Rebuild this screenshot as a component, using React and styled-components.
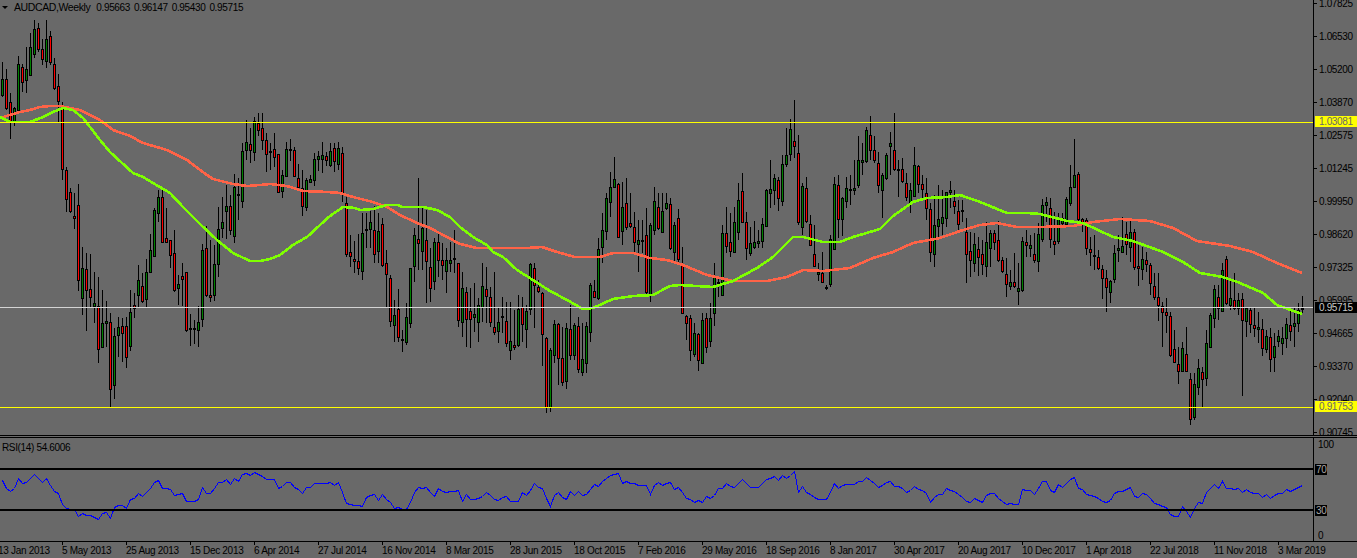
import React from "react";
import styled, { createGlobalStyle } from "styled-components";

const GlobalStyle = createGlobalStyle`
  html, body {
    margin: 0;
    padding: 0;
    overflow: hidden;
    background: #696969;
  }
`;

const Chart = styled.div`
  width: 1357px;
  height: 558px;
  background: #696969;
  color: #000;
  font-family: "Liberation Sans", Arial, sans-serif;
  font-size: 10px;
  letter-spacing: -0.35px;
  line-height: 11px;
  display: flex;
  flex-direction: column;
  overflow: hidden;
`;

const Row = styled.div`
  display: flex;
  height: ${(p) => p.$height}px;
  border-top: ${(p) => (p.$top ? "1px solid #000" : "0")};
  border-bottom: 1px solid #000;
  margin-bottom: ${(p) => p.$gap || 0}px;
  flex: none;
`;

const Plot = styled.div`
  position: relative;
  width: 1313px;
  flex: none;
  overflow: hidden;

  svg {
    display: block;
  }
`;

const Legend = styled.div`
  position: absolute;
  left: ${(p) => p.$left}px;
  top: ${(p) => p.$top}px;
  display: flex;
  align-items: center;
  gap: 6px;
  white-space: nowrap;
`;

const Caret = styled.span`
  width: 0;
  height: 0;
  border-left: 3px solid transparent;
  border-right: 3px solid transparent;
  border-top: 3px solid #000;
`;

const Symbol = styled.span`
  font-size: 10.5px;
  letter-spacing: -0.4px;
`;

const Quotes = styled.span`
  display: flex;
  gap: 4px;
`;

const Axis = styled.div`
  position: relative;
  flex: 1;
  border-left: 1px solid #000;
  display: flex;
  flex-direction: column;
  justify-content: ${(p) => (p.$spread ? "space-between" : "flex-start")};
  padding-top: ${(p) => (p.$spread ? 1 : 0)}px;
`;

const PriceTick = styled.div`
  position: relative;
  flex: none;
  height: 33px;
  line-height: 33px;
  padding-left: 5px;
  top: -13px;

  &::before {
    content: "";
    position: absolute;
    left: 0;
    top: 16px;
    width: 3px;
    height: 1px;
    background: #000;
  }
`;

const LevelLabel = styled.div`
  height: 11px;
  padding-left: 4px;
`;

const Badge = styled.div`
  position: absolute;
  left: 1px;
  right: ${(p) => p.$right || 0}px;
  top: ${(p) => p.$top}px;
  height: 11px;
  line-height: 11px;
  padding-left: ${(p) => p.$pad || 4}px;
  background: ${(p) => p.$bg};
  color: ${(p) => p.$color};
`;

const Dates = styled.div`
  display: flex;
  margin-left: -2px;
  height: 16px;
`;

const DateCell = styled.div`
  position: relative;
  flex: none;
  width: 64px;
  line-height: 17px;
  white-space: nowrap;
  letter-spacing: -0.3px;

  &::before {
    content: "";
    display: ${(p) => (p.$first ? "none" : "block")};
    position: absolute;
    left: 0;
    top: 0;
    width: 1px;
    height: 3px;
    background: #000;
  }
`;

const prices = [
  "1.07825", "1.06530", "1.05200", "1.03870", "1.02575", "1.01245", "0.99950",
  "0.98620", "0.97325", "0.95995", "0.94665", "0.93370", "0.92040", "0.90745",
];

const dates = [
  "13 Jan 2013", "5 May 2013", "25 Aug 2013", "15 Dec 2013", "6 Apr 2014", "27 Jul 2014",
  "16 Nov 2014", "8 Mar 2015", "28 Jun 2015", "18 Oct 2015", "7 Feb 2016", "29 May 2016",
  "18 Sep 2016", "8 Jan 2017", "30 Apr 2017", "20 Aug 2017", "10 Dec 2017", "1 Apr 2018",
  "22 Jul 2018", "11 Nov 2018", "3 Mar 2019",
];

// [up, bodyTop, bodyBottom, wickTop, wickBottom], in pixels of the plot
const candles = [
  [1,79,95,62,97],[0,79,108,69,110],[0,102,122,93,139],[1,108,122,107,126],[1,64,110,56,112],
  [0,67,82,64,92],[1,69,80,47,93],[1,47,75,33,76],[1,29,54,20,58],[0,28,49,23,52],
  [0,49,59,39,65],[1,39,61,20,68],[0,36,62,31,65],[0,64,88,58,90],[0,86,101,74,123],
  [0,107,169,102,180],[0,170,199,167,212],[0,192,211,188,213],[0,216,218,193,229],[0,205,280,184,291],
  [1,268,298,247,315],[0,269,290,253,331],[0,289,297,254,307],[1,303,306,272,323],[0,306,349,277,363],
  [1,323,347,290,347],[1,321,323,301,347],[0,322,389,313,408],[1,336,385,328,399],[1,327,335,317,357],
  [0,326,333,318,362],[0,326,357,317,368],[1,312,346,290,351],[0,305,308,293,318],[1,280,295,265,307],
  [0,286,301,273,303],[1,272,299,259,308],[1,250,272,234,273],[1,210,256,208,257],[1,197,213,190,222],
  [0,197,242,188,243],[0,238,242,208,243],[0,240,255,240,268],[0,253,290,230,292],[1,284,288,275,305],
  [0,276,279,263,306],[0,272,330,272,332],[0,328,329,314,346],[0,328,329,320,344],[1,322,330,306,347],
  [1,250,319,244,327],[0,248,295,226,297],[0,295,297,240,302],[1,264,295,245,301],[1,229,264,207,277],
  [1,222,228,197,238],[1,206,211,185,239],[0,206,230,195,235],[1,187,236,174,243],[0,194,195,178,220],
  [1,151,201,143,208],[1,142,150,120,160],[0,144,150,128,163],[1,121,152,117,161],[0,123,130,113,136],
  [0,128,140,113,150],[0,140,154,133,172],[0,151,152,143,170],[0,149,157,133,167],[0,154,192,154,193],
  [1,175,191,170,198],[1,149,176,142,177],[0,149,150,139,161],[0,150,176,147,177],[0,178,187,164,188],
  [0,188,206,170,216],[1,180,207,178,211],[1,179,182,175,183],[1,159,180,153,186],[1,156,159,151,171],
  [1,155,159,142,173],[0,156,160,152,166],[1,151,165,143,167],[0,148,161,143,172],[1,148,164,142,170],
  [0,153,194,147,202],[0,203,254,197,257],[0,252,256,235,267],[0,259,261,241,273],[0,261,268,234,275],
  [1,233,271,213,280],[0,229,230,213,248],[1,222,229,211,248],[0,230,254,206,263],[1,231,251,213,263],
  [0,224,265,218,267],[0,263,274,250,308],[0,278,321,275,327],[1,315,325,300,342],[0,309,337,289,342],
  [0,339,340,330,352],[1,317,342,303,345],[1,268,323,268,328],[1,235,266,228,282],[0,239,243,178,270],
  [1,228,251,207,270],[0,240,261,210,303],[0,267,288,248,302],[1,242,281,238,290],[0,242,260,232,277],
  [0,260,265,243,280],[1,260,271,248,293],[1,260,263,242,272],[0,258,259,230,273],[0,263,320,263,327],
  [1,288,322,272,337],[0,292,319,287,347],[0,311,319,288,348],[1,314,317,283,332],[1,305,322,298,342],
  [1,286,307,263,322],[0,289,296,267,323],[0,297,322,287,327],[0,327,332,272,335],[1,322,331,307,343],
  [0,316,317,297,333],[0,321,343,302,347],[1,341,350,302,360],[0,345,347,310,350],[1,309,345,295,347],
  [0,307,324,297,342],[1,311,329,305,348],[1,264,309,263,315],[0,268,285,263,328],[0,287,291,280,293],
  [0,293,334,292,366],[0,338,407,337,413],[1,350,407,348,412],[1,324,355,320,363],[0,324,358,323,385],
  [0,358,382,327,386],[1,328,381,323,389],[0,329,355,305,360],[1,325,355,323,360],[0,326,369,317,373],
  [1,359,372,323,376],[1,326,363,322,373],[1,285,332,283,342],[0,291,297,280,298],[1,249,298,238,300],
  [1,230,247,213,263],[1,198,231,193,240],[1,187,202,172,217],[1,179,187,157,188],[0,184,237,183,238],
  [1,207,231,182,245],[0,203,227,178,230],[0,223,226,193,228],[0,227,242,212,252],[1,240,244,220,272],
  [0,240,241,220,253],[0,235,292,208,295],[1,225,294,223,302],[1,201,230,187,235],[0,207,228,193,230],
  [1,211,232,193,233],[1,203,208,193,210],[0,204,248,198,250],[1,225,252,222,262],[0,218,259,209,262],
  [0,265,313,247,313],[0,316,323,315,340],[0,318,350,315,361],[1,333,354,323,357],[0,334,360,333,371],
  [1,320,363,313,364],[0,318,347,313,353],[1,318,341,303,347],[1,277,313,263,326],[0,282,283,277,297],
  [1,233,295,225,296],[0,233,246,207,253],[0,242,251,213,257],[1,222,252,207,253],[1,200,232,183,240],
  [0,191,222,173,223],[0,222,248,212,260],[1,243,253,227,256],[1,242,247,221,249],[1,241,243,230,248],
  [1,224,241,218,248],[1,190,226,189,227],[1,189,193,160,208],[1,178,190,174,205],[0,180,198,177,211],
  [1,164,201,155,206],[1,155,164,128,167],[1,129,154,119,161],[0,141,146,100,158],[0,153,222,135,225],
  [1,186,227,183,235],[0,188,221,177,223],[0,224,245,215,246],[0,254,266,225,267],[1,272,274,263,281],
  [0,273,282,252,283],[0,287,288,285,290],[1,239,284,235,287],[1,184,249,177,250],[0,185,219,175,238],
  [1,198,219,197,236],[1,188,201,177,208],[0,189,190,175,205],[1,188,190,160,195],[1,160,185,136,188],
  [1,160,162,143,175],[1,130,161,127,163],[0,135,150,116,160],[0,150,160,136,163],[0,163,185,152,193],
  [1,175,190,173,218],[1,155,178,153,180],[1,143,146,132,175],[0,150,169,113,171],[0,169,170,160,197],
  [0,169,181,158,183],[0,183,197,173,201],[1,190,202,183,213],[1,165,196,147,197],[0,166,184,165,193],
  [0,184,189,175,200],[0,193,208,178,220],[0,209,252,203,262],[1,225,254,195,267],[1,219,226,185,238],
  [1,217,223,190,235],[1,192,218,192,227],[1,190,192,181,208],[0,201,206,190,214],[0,211,224,200,230],
  [0,210,211,200,222],[0,232,254,218,283],[0,251,260,232,277],[1,244,263,233,272],[0,249,257,237,276],
  [0,254,264,240,275],[1,242,266,222,277],[1,233,248,230,267],[0,233,242,230,250],[0,240,260,221,262],
  [0,260,271,257,273],[0,274,284,258,297],[1,282,286,270,290],[0,282,286,253,288],[1,288,291,263,305],
  [1,241,290,237,292],[0,242,245,230,257],[1,245,248,235,257],[0,254,260,233,263],[1,234,261,223,272],
  [1,205,239,199,242],[1,202,205,197,222],[0,208,239,198,248],[0,241,244,212,255],[1,219,241,213,244],
  [1,218,223,213,228],[1,199,224,197,225],[1,187,203,165,206],[1,175,187,139,188],[0,174,219,172,221],
  [0,219,223,218,232],[0,220,248,218,255],[0,249,252,237,266],[0,255,256,235,270],[0,257,268,250,270],
  [0,269,278,265,299],[0,278,287,270,312],[1,281,292,280,303],[1,253,279,245,283],[1,248,250,235,262],
  [1,246,252,217,253],[0,234,244,222,255],[1,232,247,220,262],[0,232,267,229,270],[0,266,268,245,286],
  [1,259,269,247,280],[0,260,264,252,272],[0,265,283,263,295],[0,286,297,273,300],[0,297,305,273,321],
  [0,306,312,302,347],[0,312,315,298,333],[0,316,355,312,357],[0,349,362,330,363],[0,364,371,347,384],
  [1,348,371,342,372],[0,354,371,327,372],[0,379,419,373,425],[1,384,417,373,420],[1,368,387,359,395],
  [0,372,379,367,407],[1,343,378,330,386],[1,315,347,313,348],[1,289,318,285,328],[0,297,308,285,320],
  [1,270,311,263,312],[0,259,303,256,305],[1,298,305,280,310],[0,300,308,273,310],[1,300,308,293,315],
  [0,299,320,293,396],[1,308,321,307,337],[0,310,324,307,333],[0,325,328,307,337],[1,327,329,312,343],
  [0,329,348,319,356],[1,336,349,330,353],[0,337,359,328,372],[1,346,357,333,372],[1,336,341,330,347],
  [1,338,343,327,355],[1,324,338,318,348],[0,325,331,310,341],[1,323,326,308,347],[1,310,323,303,332],
  [0,308,309,296,313],
];

const slowAverage = [
  [0,118],[10,115],[20,112],[30,110],[40,107],[50,106],[60,106],[70,108],[80,110],[90,115],[100,120],
  [113,130],[130,136],[143,143],[167,150],[187,160],[207,175],[213,179],[233,184],[247,186],[260,185],
  [270,184],[287,186],[303,191],[327,192],[340,193],[353,197],[373,202],[387,207],[400,215],[417,223],
  [430,228],[447,237],[460,244],[477,248],[527,248],[542,247],[557,252],[575,257],[600,257],[613,253],
  [633,253],[650,258],[667,260],[683,265],[707,275],[733,281],[767,281],[787,277],[803,270],[823,271],
  [850,268],[873,258],[893,252],[913,243],[940,238],[960,231],[980,225],[997,223],[1017,227],[1040,227],
  [1073,226],[1093,222],[1120,219],[1150,221],[1173,228],[1197,241],[1230,246],[1253,252],[1277,263],[1302,273],
];

const fastAverage = [
  [0,117],[10,122],[30,122],[43,117],[53,112],[63,108],[73,110],[83,118],[90,127],[100,140],[110,152],
  [133,173],[143,177],[153,183],[170,193],[183,207],[200,224],[217,240],[233,253],[250,261],[260,261],
  [270,259],[280,255],[293,245],[307,237],[320,225],[330,216],[343,207],[355,208],[360,210],[373,209],
  [387,205],[398,205],[402,207],[423,207],[437,210],[450,217],[460,227],[473,237],[487,245],[493,252],
  [503,257],[517,270],[533,280],[550,291],[567,300],[583,309],[593,308],[613,299],[633,296],[653,295],
  [670,286],[680,285],[713,287],[733,281],[757,268],[773,257],[787,243],[793,237],[803,237],[823,242],
  [840,242],[853,237],[880,229],[893,216],[913,202],[927,198],[947,197],[960,195],[980,202],[1007,213],
  [1027,213],[1040,214],[1067,221],[1083,223],[1113,237],[1133,241],[1163,252],[1183,262],[1200,273],
  [1223,277],[1240,283],[1263,293],[1277,305],[1302,314],
];

// one value per candle, page pixels
const rsi = [
  480,488,491,488,478,483,482,478,474,478,
  482,478,485,491,493,504,508,509,509,516,
  513,515,515,517,519,513,512,518,507,505,
  505,508,499,498,493,496,492,488,482,480,
  488,488,489,495,494,493,501,501,501,499,
  487,493,493,488,482,482,479,484,478,481,
  474,473,475,472,474,476,479,479,479,488,
  486,482,482,487,489,493,487,487,483,483,
  483,483,482,485,482,492,503,504,505,505,
  506,497,495,494,500,494,499,502,508,507,
  509,509,502,492,487,488,487,492,496,488,
  491,492,491,491,490,501,494,499,499,498,
  496,492,495,499,500,497,496,501,501,501,
  492,495,490,483,487,488,498,506,495,492,
  497,499,491,495,491,495,494,489,484,486,
  481,478,475,474,473,483,481,483,483,485,
  485,485,494,485,482,485,483,482,489,487,
  492,498,499,502,500,502,496,498,495,488,
  488,483,486,487,483,479,483,487,487,487,
  483,479,478,476,480,475,478,475,471,492,
  486,492,494,497,499,499,499,492,483,488,
  485,484,484,484,481,481,477,480,483,487,
  485,482,481,486,486,488,492,490,486,489,
  490,493,502,497,494,494,488,490,491,494,
  497,501,502,498,500,502,495,493,493,498,
  501,504,503,504,504,489,490,490,494,488,
  481,481,490,492,484,487,483,479,477,488,
  489,494,495,496,498,501,502,500,493,491,
  491,489,487,496,497,493,494,498,503,504,
  506,507,514,516,516,506,511,517,508,502,
  503,492,488,484,488,481,488,488,489,488,
  492,489,492,493,493,497,494,498,495,493,
  493,489,491,489,487,485,
];

const RSI_TOP = 438;

function Candle({ index, data }) {
  const [up, top, bottom, high, low] = data;
  const x = 2 + index * 4;
  const height = Math.max(bottom - top, 1);
  return (
    <g>
      <rect x={x} y={high} width="1" height={low - high} fill="#000" />
      <rect x={x - 1} y={top} width="3" height={height + 1} fill="#000" />
      {height > 1 && (
        <rect x={x} y={top + 1} width="1" height={height - 1} fill={up ? "#008000" : "#ff0000"} />
      )}
    </g>
  );
}

const toPoints = (list) => list.map(([x, y]) => `${x},${y}`).join(" ");

function PricePlot() {
  return (
    <Plot>
      <svg width="1313" height="435" shapeRendering="crispEdges">
        {candles.map((c, i) => (
          <Candle key={i} index={i} data={c} />
        ))}
        <polyline points={toPoints(slowAverage)} fill="none" stroke="#ff6347" strokeWidth="2.6" />
        <polyline points={toPoints(fastAverage)} fill="none" stroke="#7fff00" strokeWidth="2.6" />
        <rect x="0" y="122" width="1313" height="1" fill="#ffff00" />
        <rect x="0" y="407" width="1313" height="1" fill="#ffff00" />
        <rect x="0" y="307" width="1313" height="1" fill="#d4d4d4" />
      </svg>
      <Legend $left={2} $top={2}>
        <Caret />
        <Symbol>AUDCAD,Weekly</Symbol>
        <Quotes>
          <span>0.95663</span>
          <span>0.96147</span>
          <span>0.95430</span>
          <span>0.95715</span>
        </Quotes>
      </Legend>
    </Plot>
  );
}

function RsiPlot() {
  const points = rsi.map((y, i) => `${2.5 + i * 4},${y - RSI_TOP + 0.5}`).join(" ");
  return (
    <Plot>
      <svg width="1313" height="103" shapeRendering="crispEdges">
        <polyline points={points} fill="none" stroke="#0000ff" strokeWidth="1" />
        <rect x="0" y={468 - RSI_TOP} width="1313" height="2" fill="#000" />
        <rect x="0" y={509 - RSI_TOP} width="1313" height="2" fill="#000" />
      </svg>
      <Legend $left={2} $top={4}>RSI(14) 54.6006</Legend>
    </Plot>
  );
}

export default function App() {
  return (
    <>
      <GlobalStyle />
      <Chart>
        <Row $height={435} $gap={1}>
          <PricePlot />
          <Axis>
            {prices.map((p) => (
              <PriceTick key={p}>{p}</PriceTick>
            ))}
            <Badge $top={116} $bg="#ffff00" $color="#696969">1.03081</Badge>
            <Badge $top={302} $bg="#000" $color="#c8c8c8">0.95715</Badge>
            <Badge $top={401} $bg="#ffff00" $color="#696969">0.91753</Badge>
          </Axis>
        </Row>
        <Row $height={103} $top>
          <RsiPlot />
          <Axis $spread>
            <LevelLabel>100</LevelLabel>
            <LevelLabel>0</LevelLabel>
            <Badge $top={26} $right={30} $bg="#000" $color="#a8a8a8" $pad={1}>70</Badge>
            <Badge $top={67} $right={30} $bg="#000" $color="#a8a8a8" $pad={1}>30</Badge>
          </Axis>
        </Row>
        <Dates>
          {dates.map((d, i) => (
            <DateCell key={d} $first={i === 0}>{d}</DateCell>
          ))}
        </Dates>
      </Chart>
    </>
  );
}
